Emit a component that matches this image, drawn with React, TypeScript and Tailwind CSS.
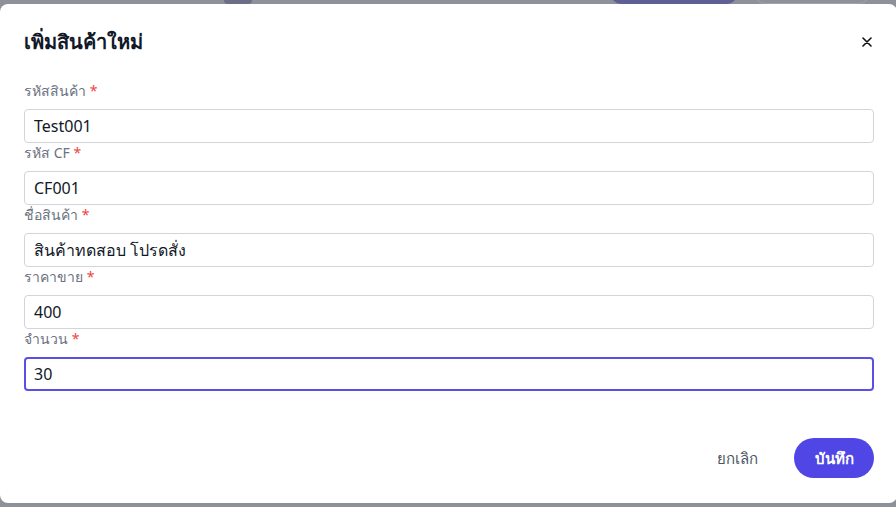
import React from "react";

const fields = [
  { label: "รหัสสินค้า", value: "Test001" },
  { label: "รหัส CF", value: "CF001" },
  { label: "ชื่อสินค้า", value: "สินค้าทดสอบ โปรดสั่ง" },
  { label: "ราคาขาย", value: "400" },
  { label: "จำนวน", value: "30", focused: true },
];

export default function App() {
  return (
    <div
      className="relative h-[507px] w-[896px] overflow-hidden bg-[#8e9199] pt-[4px]"
      style={{ fontFamily: '"Noto Sans", "Segoe UI", Inter, sans-serif' }}
    >
      <div className="absolute left-[224px] top-[-20px] h-[24px] w-[28px] rounded-b bg-[#6b6e86]" />
      <div className="absolute left-[610px] top-[-20px] h-[24px] w-[128px] rounded-full bg-[#5f5f97]" />
      <div className="absolute left-[753px] top-[-20px] h-[24px] w-[118px] rounded-full border border-[#a0a3aa] bg-[#8e9199]" />
      <div className="relative flex h-[499px] w-[897px] flex-col rounded-lg bg-white pb-[25px] pl-6 pr-[23px] pt-6">
        <div className="flex h-[28px] items-center justify-between">
          <h2 className="text-[20px] font-semibold leading-7 text-[#111827]">เพิ่มสินค้าใหม่</h2>
          <svg width="10" height="10" viewBox="0 0 10 10" className="mr-[2px]" aria-hidden>
            <path d="M1 1 L9 9 M9 1 L1 9" stroke="#111" strokeWidth="1.6" strokeLinecap="round" />
          </svg>
        </div>
        <div className="mt-[25px] flex flex-col">
          {fields.map((f) => (
            <div key={f.label} className="flex flex-col">
              <label className="mb-2 h-5 text-[14px] leading-5 text-[#6b7280]">
                {f.label} <span className="text-[#ef4444]">*</span>
              </label>
              <div
                className={
                  f.focused
                    ? "flex h-[34px] items-center rounded-[4px] border-2 border-[#5b50e6] px-[8px] text-[16px] text-[#111827]"
                    : "flex h-[34px] items-center rounded-[4px] border border-[#d1d5db] px-[9px] text-[16px] text-[#111827]"
                }
              >
                {f.value}
              </div>
            </div>
          ))}
        </div>
        <div className="mt-auto flex items-center justify-end gap-[36px]">
          <span className="text-[15px] text-[#4b5563]">ยกเลิก</span>
          <button className="h-[40px] w-[80px] rounded-full bg-[#4f46e5] text-[15px] font-bold text-white">
            บันทึก
          </button>
        </div>
      </div>
    </div>
  );
}
